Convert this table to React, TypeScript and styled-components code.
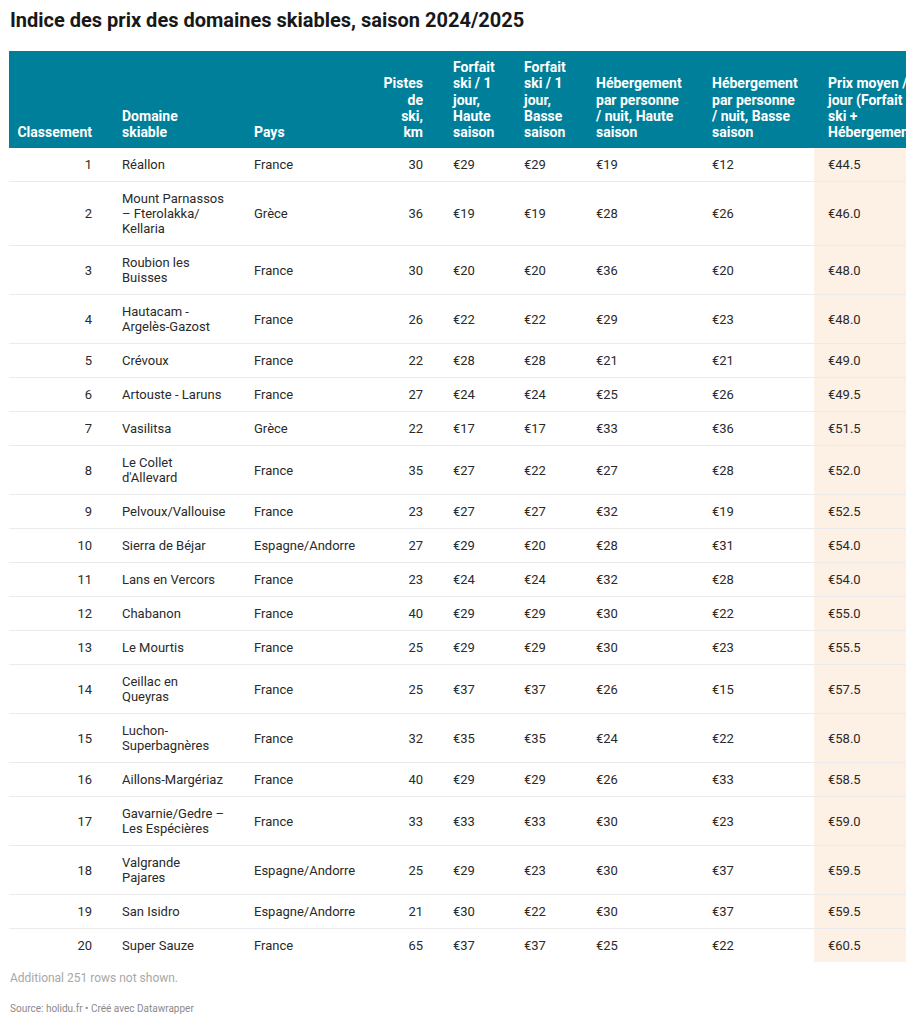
import React from "react";
import styled, { createGlobalStyle } from "styled-components";

const Global = createGlobalStyle`
  html, body { margin: 0; padding: 0; background: #ffffff; }
  body { font-family: Roboto, "Liberation Sans", Arial, sans-serif; color: #333333; }
`;

const Page = styled.div`
  width: 915px;
  padding: 8px 9px 0 9px;
  box-sizing: border-box;
`;

const Title = styled.h1`
  margin: 0 0 19px 1px;
  font-size: 20px;
  line-height: 24px;
  font-weight: 700;
  color: #181818;
`;

const TableClip = styled.div`
  width: 897px;
  overflow: hidden;
`;

const Table = styled.table`
  width: 921px;
  table-layout: fixed;
  border-collapse: collapse;
  border-spacing: 0;
  font-size: 13px;
`;

type CellProps = { $align?: "left" | "right"; $pl: number; $pr: number; $hl?: boolean };

const HeadCell = styled.th<CellProps>`
  background: #007f9b;
  color: #ffffff;
  font-weight: 700;
  font-size: 14px;
  line-height: 16.25px;
  vertical-align: bottom;
  text-align: ${(p) => p.$align ?? "left"};
  padding: 8px ${(p) => p.$pr}px 8px ${(p) => p.$pl}px;
  white-space: normal;
  overflow: hidden;
`;

const BodyCell = styled.td<CellProps>`
  color: #2a2a2a;
  font-size: 13px;
  line-height: 15px;
  vertical-align: middle;
  text-align: ${(p) => p.$align ?? "left"};
  padding: 9px ${(p) => p.$pr}px 9px ${(p) => p.$pl}px;
  border-bottom: 1px solid #ebebeb;
  background: ${(p) => (p.$hl ? "#fdf1e6" : "transparent")};
  font-variant-numeric: tabular-nums;
`;

const Row = styled.tr`
  &:last-child td { border-bottom: none; }
`;

const Note = styled.div`
  margin: 8px 0 0 1px;
  font-size: 12px;
  line-height: 16px;
  color: #a8a8a8;
`;

const Source = styled.div`
  margin: 16px 0 0 1px;
  font-size: 10px;
  line-height: 14px;
  color: #8a8a8a;
`;

type Col = { w: number; pl: number; pr: number; align?: "left" | "right"; hl?: boolean; label: string };

const cols: Col[] = [
  { w: 99, pl: 8, pr: 16, align: "right", label: "Classement" },
  { w: 132, pl: 14, pr: 14.5, label: "Domaine skiable" },
  { w: 123, pl: 14, pr: 12, label: "Pays" },
  { w: 76, pl: 20, pr: 16, align: "right", label: "Pistes de ski, km" },
  { w: 71, pl: 14, pr: 12, label: "Forfait ski / 1 jour, Haute saison" },
  { w: 72, pl: 14, pr: 12, label: "Forfait ski / 1 jour, Basse saison" },
  { w: 116, pl: 14, pr: 12, label: "Hébergement par personne / nuit, Haute saison" },
  { w: 116, pl: 14, pr: 12, label: "Hébergement par personne / nuit, Basse saison" },
  { w: 116, pl: 14, pr: 12, hl: true, label: "Prix moyen / jour (Forfait ski + Hébergement)" },
];

const rows: (string | number)[][] = [
  [1, "Réallon", "France", 30, "€29", "€29", "€19", "€12", "€44.5"],
  [2, "Mount Parnassos – Fterolakka/\u200BKellaria", "Grèce", 36, "€19", "€19", "€28", "€26", "€46.0"],
  [3, "Roubion les Buisses", "France", 30, "€20", "€20", "€36", "€20", "€48.0"],
  [4, "Hautacam - Argelès-Gazost", "France", 26, "€22", "€22", "€29", "€23", "€48.0"],
  [5, "Crévoux", "France", 22, "€28", "€28", "€21", "€21", "€49.0"],
  [6, "Artouste - Laruns", "France", 27, "€24", "€24", "€25", "€26", "€49.5"],
  [7, "Vasilitsa", "Grèce", 22, "€17", "€17", "€33", "€36", "€51.5"],
  [8, "Le Collet d'Allevard", "France", 35, "€27", "€22", "€27", "€28", "€52.0"],
  [9, "Pelvoux/Vallouise", "France", 23, "€27", "€27", "€32", "€19", "€52.5"],
  [10, "Sierra de Béjar", "Espagne/Andorre", 27, "€29", "€20", "€28", "€31", "€54.0"],
  [11, "Lans en Vercors", "France", 23, "€24", "€24", "€32", "€28", "€54.0"],
  [12, "Chabanon", "France", 40, "€29", "€29", "€30", "€22", "€55.0"],
  [13, "Le Mourtis", "France", 25, "€29", "€29", "€30", "€23", "€55.5"],
  [14, "Ceillac en Queyras", "France", 25, "€37", "€37", "€26", "€15", "€57.5"],
  [15, "Luchon-Superbagnères", "France", 32, "€35", "€35", "€24", "€22", "€58.0"],
  [16, "Aillons-Margériaz", "France", 40, "€29", "€29", "€26", "€33", "€58.5"],
  [17, "Gavarnie/Gedre – Les Espécières", "France", 33, "€33", "€33", "€30", "€23", "€59.0"],
  [18, "Valgrande Pajares", "Espagne/Andorre", 25, "€29", "€23", "€30", "€37", "€59.5"],
  [19, "San Isidro", "Espagne/Andorre", 21, "€30", "€22", "€30", "€37", "€59.5"],
  [20, "Super Sauze", "France", 65, "€37", "€37", "€25", "€22", "€60.5"],
];

export default function App() {
  return (
    <Page>
      <Global />
      <Title>Indice des prix des domaines skiables, saison 2024/2025</Title>
      <TableClip>
        <Table>
          <colgroup>
            {cols.map((c, i) => (
              <col key={i} style={{ width: c.w }} />
            ))}
          </colgroup>
          <thead>
            <tr>
              {cols.map((c, i) => (
                <HeadCell key={i} $align={c.align} $pl={c.pl} $pr={c.pr}>
                  {c.label}
                </HeadCell>
              ))}
            </tr>
          </thead>
          <tbody>
            {rows.map((r, ri) => (
              <Row key={ri}>
                {r.map((v, ci) => (
                  <BodyCell
                    key={ci}
                    $align={cols[ci].align}
                    $pl={cols[ci].pl}
                    $pr={cols[ci].pr}
                    $hl={cols[ci].hl}
                  >
                    {v}
                  </BodyCell>
                ))}
              </Row>
            ))}
          </tbody>
        </Table>
      </TableClip>
      <Note>Additional 251 rows not shown.</Note>
      <Source>Source: holidu.fr • Créé avec Datawrapper</Source>
    </Page>
  );
}
